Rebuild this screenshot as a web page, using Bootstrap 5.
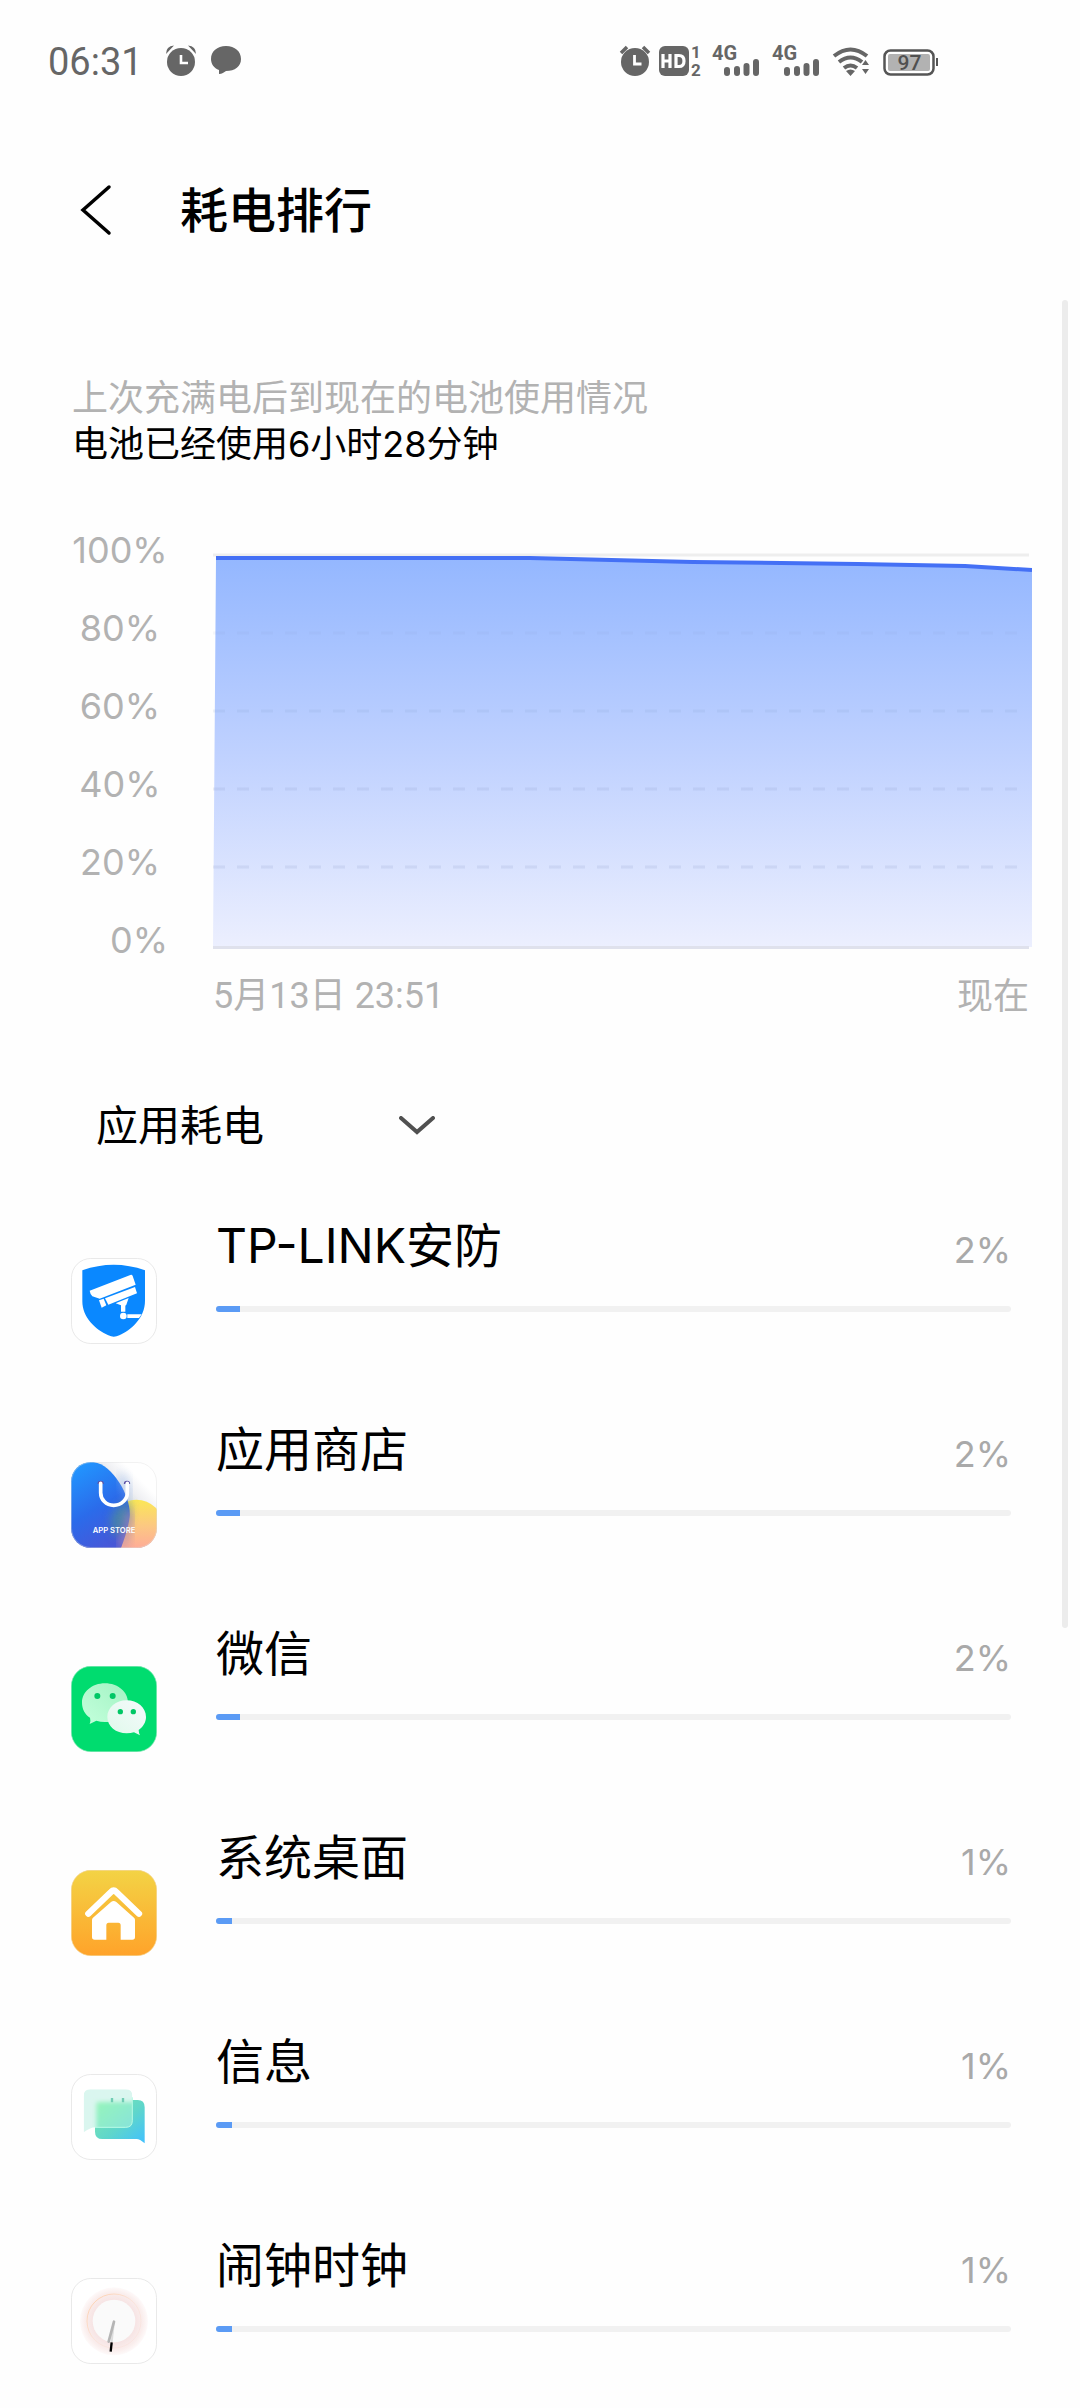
<!DOCTYPE html>
<html lang="zh-CN">
<head>
<meta charset="utf-8">
<meta name="viewport" content="width=device-width, initial-scale=1">
<title>耗电排行</title>
<link href="https://cdn.jsdelivr.net/npm/bootstrap@5.3.0/dist/css/bootstrap.min.css" rel="stylesheet">
<style>
  body { background: #fefefe; color: #000; font-family: Inter, "Noto Sans CJK SC", sans-serif; font-size: 36px; line-height: 46px; }
  .num { font-family: Roboto, "Noto Sans CJK SC", sans-serif; }
  .status-bar { padding: 41px 142px 0 48px; line-height: 42px; color: #666; }
  .status-time { font-size: 38px; }
  .status-bar svg { display: block; }
  .title-bar { padding: 98px 72px 0; }
  .title-bar h1 { font-size: 48px; line-height: 60px; font-weight: 500; }
  .back-btn { width: 48px; height: 60px; margin-right: 60px; }
  .summary { padding: 134px 72px 0; }
  .soft { color: #b2b2b2; }
  .usage-chart { padding: 44px 48px 0 72px; }
  .y-axis { width: 96px; margin-right: 45px; line-height: 78px; }
  .plot { padding-top: 41px; }
  .plot svg { display: block; width: 100%; height: 398px; }
  .x-axis { padding: 22px 3px 0 0; line-height: 48px; }
  .filter { padding: 76px 72px 0 96px; }
  .filter .form-select { width: 343px; height: 60px; padding: 0; border: 0; background-color: transparent; font-size: 42px; line-height: 60px; color: #000;
    background-image: url("data:image/svg+xml,%3Csvg xmlns='http://www.w3.org/2000/svg' viewBox='0 0 38 20'%3E%3Cpath d='M3 2l16 14L35 2' fill='none' stroke='%23505050' stroke-width='4' stroke-linecap='round'/%3E%3C/svg%3E");
    background-size: 38px 20px; background-position: right 3px center; }
  .app-list { padding: 54px 69px 43px 71px; gap: 70px; }
  .app-icon { width: 86px; height: 86px; margin: 48px 59px 0 0; flex: none; }
  .app-name { font-size: 48px; line-height: 72px; font-weight: 400; }
  .app-share { color: #a9a9a9; }
  .app-list .progress { height: 6px; margin-top: 24px; border-radius: 3px; background: #f1f1f1; }
  .app-list .progress-bar { background: #5b9bf5; }
  .scroll-thumb { position: absolute; top: 300px; right: 12px; width: 6px; height: 1328px; border-radius: 3px; background: #ececec; }
</style>
<script src="https://cdn.jsdelivr.net/npm/bootstrap@5.3.0/dist/js/bootstrap.bundle.min.js"></script>
</head>
<body class="position-relative">

<header>
  <div class="status-bar d-flex justify-content-between align-items-center">
    <div class="d-flex align-items-center">
      <span class="status-time num">06:31</span>
      <svg width="104" height="42" viewBox="0 0 104 42" fill="#666" aria-label="闹钟 消息">
        <circle cx="38" cy="21" r="14"/>
        <path d="M23 13q0-8 8-8.500zM53 13q0-8-8-8.500z"/>
        <path d="M38 14v8h7" fill="none" stroke="#fff" stroke-width="2.600"/>
        <path d="M83 5c9 0 15 5.500 15 13s-6 12-15 12c-2 1-4 3-7 3v-4c-5-2-8-6-8-11 0-7.500 6-13 15-13z"/>
      </svg>
    </div>
    <svg width="320" height="42" viewBox="0 0 320 42" fill="#666" font-family="Roboto, sans-serif" aria-label="网络与电量">
      <circle cx="17" cy="21" r="14"/>
      <path d="M3 12l6-6M31 12l-6-6" stroke="#666" stroke-width="3.500"/>
      <path d="M16.500 14v9h7" fill="none" stroke="#fff" stroke-width="2.800"/>
      <rect x="41" y="5" width="30" height="30" rx="6"/>
      <path d="M45 13v14M52 13v14M45 20h7M58 14.500h3q5 0 5 5.500t-5 5.500h-3z" fill="none" stroke="#fff" stroke-width="3.200"/>
      <text x="73" y="17" font-size="17" font-weight="700">1</text>
      <text x="73" y="35" font-size="17" font-weight="700">2</text>
      <g id="signal">
        <text x="94" y="19" font-size="20" font-weight="700">4G</text>
        <path d="M109 29v3M119 28v4M128.500 25v7M138 21v11" stroke="#666" stroke-width="6" stroke-linecap="round"/>
      </g>
      <use href="#signal" x="60"/>
      <g fill="none" stroke="#666" stroke-width="4">
        <path d="M216 15q16.500-13 33 0"/><path d="M221 21q11.500-9 23 0"/><path d="M226 27q6.500-5 13 0"/>
      </g>
      <path d="M228 30q4.500-3 9 0l-4.500 5zM244 24l3.500-5 3.500 5zM244 28h7l-3.500 5z"/>
      <rect x="266.500" y="9.500" width="49" height="24" rx="6" fill="#fff" stroke="#555" stroke-width="2.500"/>
      <rect x="270" y="13" width="42" height="17" rx="2" fill="#b2b2b2"/>
      <path d="M319 17v8" stroke="#555" stroke-width="2"/>
      <text x="291.500" y="29" font-size="21" font-weight="500" text-anchor="middle" fill="#505050">97</text>
    </svg>
  </div>
  <div class="title-bar d-flex align-items-center">
    <button type="button" class="back-btn btn p-0 border-0 d-flex align-items-center" aria-label="返回">
      <svg width="48" height="60" viewBox="0 0 48 60"><path d="M37 6L11 29l26 23" fill="none" stroke="#000" stroke-width="3.500" stroke-linecap="round"/></svg>
    </button>
    <h1 class="m-0">耗电排行</h1>
  </div>
</header>

<main>
  <section class="summary">
    <div class="soft">上次充满电后到现在的电池使用情况</div>
    <div>电池已经使用6小时28分钟</div>
  </section>

  <section class="usage-chart d-flex">
    <div class="y-axis soft text-center flex-shrink-0">
      <div>100%</div><div>80%</div><div>60%</div><div>40%</div><div>20%</div><div class="text-end">0%</div>
    </div>
    <div class="flex-grow-1">
      <div class="plot">
        <svg viewBox="0 0 819 398" preserveAspectRatio="none" role="img" aria-label="电量曲线">
          <defs><linearGradient id="charge" x1="0" y1="0" x2="0" y2="1"><stop offset="0" stop-color="#94b7ff"/><stop offset=".5" stop-color="#bfd1ff"/><stop offset="1" stop-color="#eceffe"/></linearGradient></defs>
          <path d="M0 3h816" stroke="#eee" stroke-width="3"/>
          <path d="M3 6H317L480 10L645 13L752 14L819 18V395H0z" fill="url(#charge)"/>
          <g stroke="#7d90bd" stroke-width="3" stroke-dasharray="12 12">
            <path d="M0 81h816" stroke-opacity=".07"/><path d="M0 159h816" stroke-opacity=".12"/><path d="M0 237h816M0 315h816" stroke-opacity=".15"/>
          </g>
          <path d="M0 395.500h816" stroke="#dfe1ec" stroke-width="3"/>
          <path d="M3 6H317L480 10L645 12L752 14L819 18" fill="none" stroke="#4470f5" stroke-width="4"/>
        </svg>
      </div>
      <div class="x-axis d-flex justify-content-between soft">
        <span class="num">5月13日 23:51</span><span>现在</span>
      </div>
    </div>
  </section>

  <div class="filter">
    <select class="form-select" aria-label="耗电类型"><option>应用耗电</option></select>
  </div>

  <ul class="app-list list-unstyled m-0 d-flex flex-column">
    <li class="d-flex align-items-start">
      <svg class="app-icon" viewBox="0 0 258 258">
        <rect x="1.500" y="1.500" width="255" height="255" rx="58" fill="#fff" stroke="#e9e9e9" stroke-width="3"/>
        <path d="M34 37Q128 4 222 37V128C222 180 180 216 145 232Q128 240 112 232C72 214 34 178 34 130z" fill="#0a88ff"/>
        <g fill="#fff">
          <path d="M56 98L178 51q5-2 7 3l9 26-108 42-22-7q-6-5-8-17z"/>
          <path d="M102 121l90-34 6 19-86 34z"/><path d="M84 127l14-5 8 20-14 7z"/>
          <path d="M134 136l39-16-7 20-3 3v18h-13v-19z"/><circle cx="157" cy="174" r="10"/><path d="M169 169h43l-8 11h-35z"/>
        </g>
      </svg>
      <div class="flex-grow-1">
        <div class="d-flex justify-content-between align-items-baseline"><h2 class="app-name m-0">TP-LINK安防</h2><span class="app-share">2%</span></div>
        <div class="progress" role="progressbar" aria-label="TP-LINK安防" aria-valuenow="2" aria-valuemin="0" aria-valuemax="100"><div class="progress-bar" style="width:3%"></div></div>
      </div>
    </li>
    <li class="d-flex align-items-start">
      <svg class="app-icon" viewBox="0 0 258 258">
        <defs>
          <clipPath id="tile"><rect width="258" height="258" rx="60"/></clipPath>
          <linearGradient id="blue" x1=".2" y1="0" x2=".6" y2="1"><stop offset="0" stop-color="#2196ff"/><stop offset=".55" stop-color="#2b6bea"/><stop offset="1" stop-color="#4757d8"/></linearGradient>
          <linearGradient id="sun" x1="0" y1="0" x2="0" y2="1"><stop offset="0" stop-color="#fbe756"/><stop offset=".5" stop-color="#fcc783"/><stop offset="1" stop-color="#ffa59c"/></linearGradient>
          <linearGradient id="paper" x1="1" y1="0" x2="0" y2="1"><stop offset=".2" stop-color="#fff"/><stop offset=".6" stop-color="#c6c8d4"/></linearGradient>
          <filter id="haze" x="-50%" y="-50%" width="200%" height="200%"><feGaussianBlur stdDeviation="14"/></filter>
        </defs>
        <g clip-path="url(#tile)">
          <rect width="258" height="258" fill="url(#paper)"/>
          <circle cx="196" cy="194" r="81" fill="url(#sun)"/>
          <path d="M0 0H68C130 10 182 110 176 165Q172 200 150 258H0z" fill="url(#blue)"/>
          <path d="M118 175Q130 130 173 116Q184 160 160 200Q140 230 128 220z" fill="#4d8f98" opacity=".75" filter="url(#haze)"/>
          <path d="M148 40Q170 75 172 110" fill="none" stroke="#8fb4ea" stroke-width="20" opacity=".6" filter="url(#haze)"/>
          <path d="M176 150Q180 200 150 258" fill="none" stroke="#b98fae" stroke-width="22" opacity=".8" filter="url(#haze)"/>
        </g>
        <rect x="1.500" y="1.500" width="255" height="255" rx="58" fill="none" stroke="#ddd" stroke-opacity=".6" stroke-width="2"/>
        <path d="M82 66a7 7 0 1 1 14 0M161 66a7 7 0 1 1 14 0" fill="none" stroke="#5a51a5" stroke-width="5"/>
        <path d="M89 64V92c0 20 16 38 39 38s41-18 41-38V64" fill="none" stroke="#fff" stroke-width="11" stroke-linecap="round"/>
        <text x="129" y="214" font-family="Inter, sans-serif" font-weight="600" font-size="23" text-anchor="middle" fill="#fff">APP STORE</text>
      </svg>
      <div class="flex-grow-1">
        <div class="d-flex justify-content-between align-items-baseline"><h2 class="app-name m-0">应用商店</h2><span class="app-share">2%</span></div>
        <div class="progress" role="progressbar" aria-label="应用商店" aria-valuenow="2" aria-valuemin="0" aria-valuemax="100"><div class="progress-bar" style="width:3%"></div></div>
      </div>
    </li>
    <li class="d-flex align-items-start">
      <svg class="app-icon" viewBox="0 0 258 258">
        <defs>
          <linearGradient id="mint" x1="0" y1="1" x2="1" y2="0"><stop offset="0" stop-color="#c4ffdc"/><stop offset="1" stop-color="#a2f3c3"/></linearGradient>
          <linearGradient id="pale" x1="0" y1="1" x2="1" y2="0"><stop offset="0" stop-color="#dff9ea"/><stop offset="1" stop-color="#f5fafc"/></linearGradient>
        </defs>
        <rect x="1" y="1" width="256" height="256" rx="59" fill="#00dc6f" stroke="#7fe6b2" stroke-width="2"/>
        <path d="M102 52c39 0 69 26 69 58s-30 58-69 58q-14 0-26-4l-20 10q4-10 1-19C42 145 33 129 33 110c0-32 30-58 69-58z" fill="url(#mint)"/>
        <path d="M167 103c32 0 58 22 58 50 0 16-9 30-22 39q0 8 4 16l-18-9q-10 3-22 3c-32 0-58-21-58-49s26-50 58-50z" fill="url(#pale)"/>
        <g fill="#00c765"><circle cx="79" cy="90" r="9"/><circle cx="125" cy="90" r="9"/><circle cx="148" cy="137" r="8"/><circle cx="187" cy="137" r="8"/></g>
      </svg>
      <div class="flex-grow-1">
        <div class="d-flex justify-content-between align-items-baseline"><h2 class="app-name m-0">微信</h2><span class="app-share">2%</span></div>
        <div class="progress" role="progressbar" aria-label="微信" aria-valuenow="2" aria-valuemin="0" aria-valuemax="100"><div class="progress-bar" style="width:3%"></div></div>
      </div>
    </li>
    <li class="d-flex align-items-start">
      <svg class="app-icon" viewBox="0 0 258 258">
        <defs><linearGradient id="amber" x1="0" y1="0" x2="0" y2="1"><stop offset="0" stop-color="#f3d345"/><stop offset="1" stop-color="#ffa32a"/></linearGradient></defs>
        <rect x="1" y="1" width="256" height="256" rx="59" fill="url(#amber)" stroke="#f3d08a" stroke-width="2"/>
        <path d="M52 131L120 66q8-8 16 0l68 65" fill="none" stroke="#fff" stroke-width="19" stroke-linecap="round" stroke-linejoin="round"/>
        <path d="M63 150q0-4 3-7l54-47q8-6 16 0l53 47q3 3 3 7v51q0 8-8 8H149V166q0-8-7-8H113q-7 0-7 8v43H71q-8 0-8-8z" fill="#fff"/>
      </svg>
      <div class="flex-grow-1">
        <div class="d-flex justify-content-between align-items-baseline"><h2 class="app-name m-0">系统桌面</h2><span class="app-share">1%</span></div>
        <div class="progress" role="progressbar" aria-label="系统桌面" aria-valuenow="1" aria-valuemin="0" aria-valuemax="100"><div class="progress-bar" style="width:2%"></div></div>
      </div>
    </li>
    <li class="d-flex align-items-start">
      <svg class="app-icon" viewBox="0 0 258 258">
        <defs>
          <linearGradient id="sea" x1="0" y1="0" x2="1" y2="1"><stop offset="0" stop-color="#7ee9ac"/><stop offset=".55" stop-color="#5fd6cb"/><stop offset="1" stop-color="#40c0ff"/></linearGradient>
          <linearGradient id="lime" x1="0" y1="0" x2="1" y2="1"><stop offset="0" stop-color="#96f5bb"/><stop offset="1" stop-color="#84dfe0"/></linearGradient>
          <filter id="soften" x="-20%" y="-20%" width="140%" height="140%"><feGaussianBlur stdDeviation="6"/></filter>
          <clipPath id="pane"><path d="M38 66q0-20 20-20H165q19 0 19 20V140q0 20-20 20H72q-12 0-34 15z"/></clipPath>
        </defs>
        <rect x="1.500" y="1.500" width="255" height="255" rx="58" fill="#fff" stroke="#e9e9e9" stroke-width="3"/>
        <path d="M72 78H200q21 0 21 22V208q-15-13-24-13H94q-22 0-22-22z" fill="url(#sea)"/>
        <g clip-path="url(#pane)"><rect x="36" y="44" width="152" height="134" fill="#daf6ef"/><rect x="76" y="84" width="124" height="100" rx="8" fill="url(#lime)" filter="url(#soften)"/></g>
        <path d="M72 160h92q20 0 20-20V70" fill="none" stroke="#b6fbe5" stroke-width="3"/>
        <path d="M123 72v13M156 72v13" stroke="#71cdb5" stroke-width="7"/>
      </svg>
      <div class="flex-grow-1">
        <div class="d-flex justify-content-between align-items-baseline"><h2 class="app-name m-0">信息</h2><span class="app-share">1%</span></div>
        <div class="progress" role="progressbar" aria-label="信息" aria-valuenow="1" aria-valuemin="0" aria-valuemax="100"><div class="progress-bar" style="width:2%"></div></div>
      </div>
    </li>
    <li class="d-flex align-items-start">
      <svg class="app-icon" viewBox="0 0 258 258">
        <defs>
          <radialGradient id="glow"><stop offset=".6" stop-color="#f6e3e3"/><stop offset=".85" stop-color="#faeeed"/><stop offset="1" stop-color="#fefafa"/></radialGradient>
          <linearGradient id="rim" x1="0" y1="0" x2="1" y2="1"><stop offset="0" stop-color="#ffbe85"/><stop offset=".5" stop-color="#fbe0d4"/><stop offset="1" stop-color="#f7e3e1"/></linearGradient>
        </defs>
        <rect x="1.500" y="1.500" width="255" height="255" rx="58" fill="#fff" stroke="#e9e9e9" stroke-width="3"/>
        <circle cx="129" cy="130" r="102" fill="url(#glow)"/>
        <circle cx="129" cy="129" r="81" fill="none" stroke="url(#rim)" stroke-width="2"/>
        <circle cx="129" cy="129" r="64" fill="#fafafa"/>
        <path d="M129 130l-7 62" stroke="#ddd" stroke-width="6"/>
        <path d="M129 131l-16 60" stroke="#b5b5b5" stroke-width="8" stroke-linecap="round"/>
        <path d="M122 193l-3 28" stroke="#000" stroke-width="7"/>
      </svg>
      <div class="flex-grow-1">
        <div class="d-flex justify-content-between align-items-baseline"><h2 class="app-name m-0">闹钟时钟</h2><span class="app-share">1%</span></div>
        <div class="progress" role="progressbar" aria-label="闹钟时钟" aria-valuenow="1" aria-valuemin="0" aria-valuemax="100"><div class="progress-bar" style="width:2%"></div></div>
      </div>
    </li>
  </ul>
</main>

<div class="scroll-thumb" aria-hidden="true"></div>
</body>
</html>
